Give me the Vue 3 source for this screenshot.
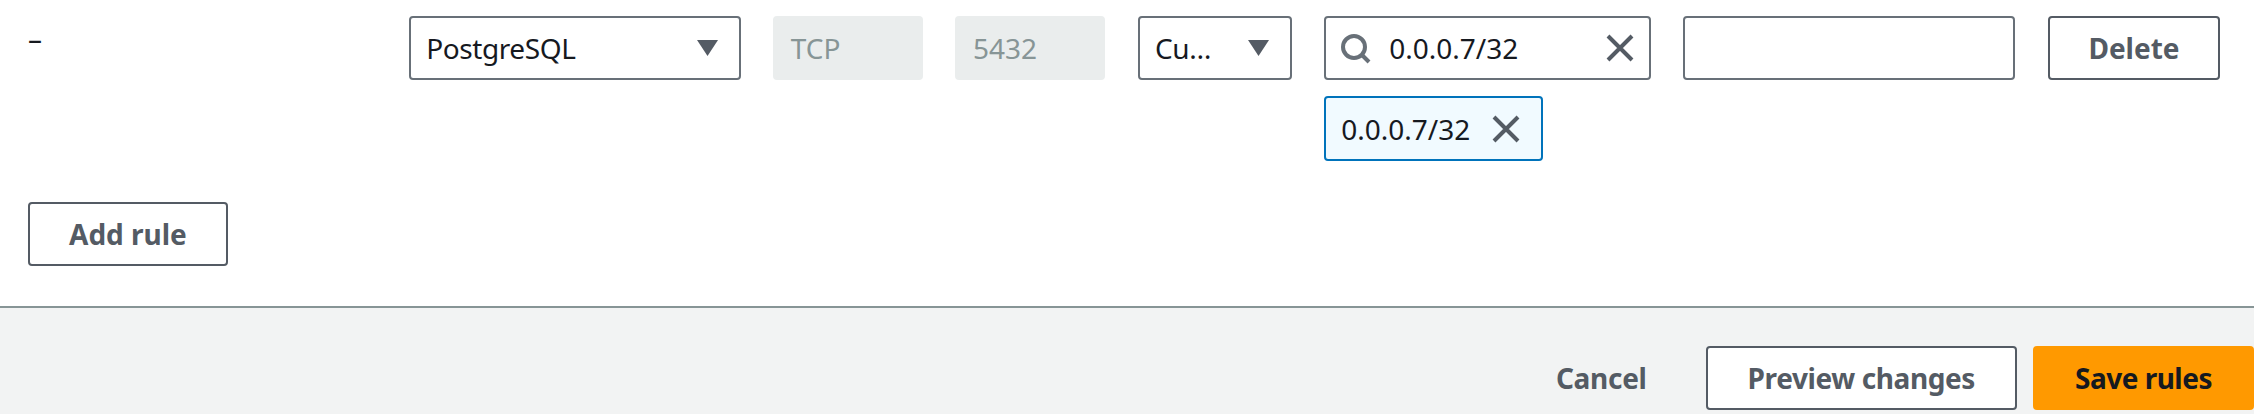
<script setup>
const ports = ['TCP', '5432']
</script>

<template>
  <div class="page">
    <section class="body">
      <div class="rule">
        <div class="cell-dash">–</div>
        <div class="field select">
          <span class="value">PostgreSQL</span>
          <svg class="caret" viewBox="0 0 21 16"><path d="M0 0h21L10.5 16z" /></svg>
        </div>
        <div v-for="p in ports" :key="p" class="field disabled">{{ p }}</div>
        <div class="field select">
          <span class="value">Cu…</span>
          <svg class="caret" viewBox="0 0 21 16"><path d="M0 0h21L10.5 16z" /></svg>
        </div>
        <div class="source">
          <div class="field search">
            <svg class="icon lens" viewBox="0 0 32 32"><circle cx="15" cy="15" r="11" /><path d="M22.5 22.5L30 30" /></svg>
            <span class="value grow">0.0.0.7/32</span>
            <svg class="icon" viewBox="0 0 32 32"><path d="M4 4L28 28M28 4L4 28" /></svg>
          </div>
          <div class="token">
            <span class="value">0.0.0.7/32</span>
            <svg class="icon" viewBox="0 0 32 32"><path d="M4 4L28 28M28 4L4 28" /></svg>
          </div>
        </div>
        <div class="field"></div>
        <button class="btn delete">Delete</button>
      </div>
      <button class="btn add">Add rule</button>
    </section>
    <footer class="footer">
      <button class="btn link">Cancel</button>
      <button class="btn preview">Preview changes</button>
      <button class="btn primary">Save rules</button>
    </footer>
  </div>
</template>

<style>
html, body { margin: 0; background: #fff; }
</style>

<style scoped>
.page {
  width: 2254px;
  height: 414px;
  overflow: hidden;
  font-family: "Noto Sans", "Open Sans", sans-serif;
  font-size: 28px;
  color: #16191f;
  background: #fff;
}
.body {
  box-sizing: border-box;
  height: 306px;
  padding: 16px 0 0 28px;
}
.rule {
  display: grid;
  grid-template-columns: 348px 332px 149.5px 149.5px 154px 326.5px 332px 172px;
  column-gap: 32.65px;
  align-items: start;
}
.cell-dash {
  line-height: 40px;
  margin-top: 2px;
}
.field {
  box-sizing: border-box;
  height: 64px;
  border: 2.5px solid #687078;
  border-radius: 4px;
  background: #fff;
  display: flex;
  align-items: center;
  padding: 0 15.5px;
}
.value {
  white-space: nowrap;
  line-height: 40px;
}
.grow { flex: 1; }
.select { justify-content: space-between; padding-right: 21px; }
.select .value { letter-spacing: -0.4px; }
.caret { width: 21px; height: 16px; flex: none; }
.caret path { fill: #545b64; }
.disabled {
  border-color: #eaeded;
  background: #eaeded;
  color: #879596;
}
.source { display: flex; flex-direction: column; gap: 16px; }
.icon {
  width: 32px;
  height: 32px;
  flex: none;
  fill: none;
  stroke: #545b64;
  stroke-width: 4;
}
.lens { stroke: #687078; }
.search { padding: 0 13px; gap: 18px; }
.token {
  box-sizing: border-box;
  width: 218.5px;
  height: 65px;
  border: 2.5px solid #0073bb;
  border-radius: 4px;
  background: #f1faff;
  display: flex;
  align-items: center;
  padding: 0 15px;
  gap: 20px;
}
.btn {
  box-sizing: border-box;
  height: 64px;
  border: 2.5px solid #545b64;
  border-radius: 4px;
  background: #fff;
  color: #545b64;
  font-family: inherit;
  font-size: 28px;
  font-weight: 700;
  line-height: 40px;
  padding: 0 39px;
  white-space: nowrap;
}
.delete { width: 172px; padding: 0; }
.add { display: block; margin-top: 41px; }
.footer {
  box-sizing: border-box;
  height: 108px;
  border-top: 2.5px solid #879596;
  background: #f2f3f3;
  display: flex;
  justify-content: flex-end;
  gap: 16px;
  padding-top: 37.5px;
}
.link { background: transparent; border-color: transparent; padding: 0 41px; letter-spacing: -0.3px; }
.preview { padding: 0 40px; letter-spacing: -0.4px; }
.primary {
  background: #f90;
  border-color: #f90;
  color: #16191f;
  padding: 0 40px;
  letter-spacing: -0.5px;
}
</style>
